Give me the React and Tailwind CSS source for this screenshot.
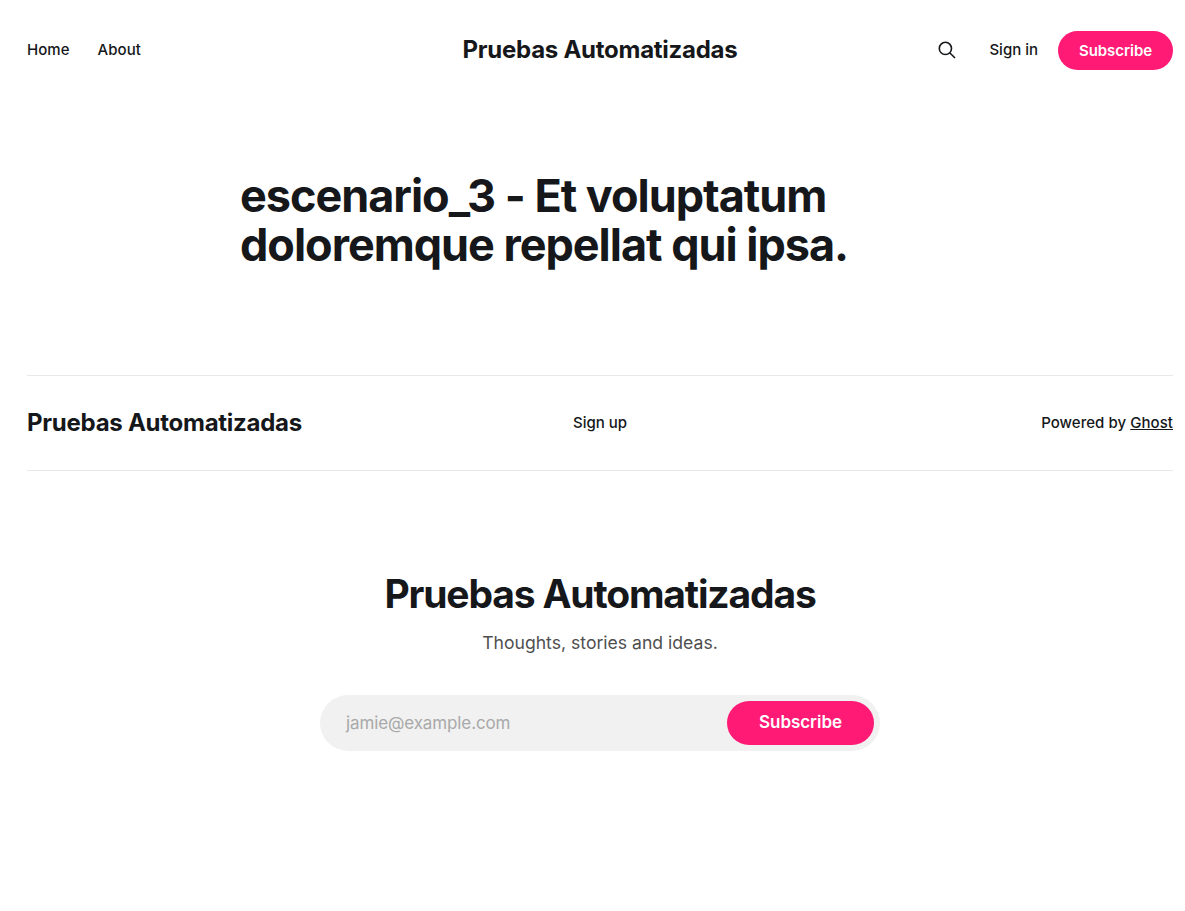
export default function App() {
  return (
    <div className="flex min-h-[911px] flex-col overflow-x-hidden bg-white font-['Inter',sans-serif] text-[#15171a]">
      <div className="w-[1200px] px-[27px] text-[15px] font-medium tracking-[0.05px] antialiased">
        <header className="grid h-[100px] grid-cols-[1fr_auto_1fr] items-center">
          <nav className="flex gap-7">
            <a>Home</a>
            <a>About</a>
          </nav>
          <a className="text-2xl font-bold tracking-[-0.26px]">Pruebas Automatizadas</a>
          <div className="flex items-center justify-end">
            <svg className="mr-8 size-5" viewBox="0 0 20 20" fill="none" stroke="currentColor" strokeWidth="1.6">
              <circle cx="8.4" cy="8.4" r="6.1" />
              <path d="M12.7 12.7L18 18" />
            </svg>
            <a className="mr-5 tracking-normal">Sign in</a>
            <a className="flex h-[39px] w-[115px] items-center justify-center rounded-full bg-[#ff1a75] pt-0.5 font-semibold tracking-[-0.06px] text-white">Subscribe</a>
          </div>
        </header>
        <main className="mx-auto w-[720px] pt-[71px]">
          <h1 className="h-[204px] text-[45px] leading-[49px] font-bold tracking-[-1.02px]">
            escenario_3 - Et voluptatum doloremque repellat qui ipsa.
          </h1>
        </main>
        <footer>
          <div className="grid h-24 grid-cols-[1fr_auto_1fr] items-center border-y border-[#e8e8e8]">
            <span className="text-2xl font-bold tracking-[-0.26px]">Pruebas Automatizadas</span>
            <a className="tracking-normal">Sign up</a>
            <div className="text-right">Powered by <a className="underline">Ghost</a></div>
          </div>
          <section className="flex flex-col items-center pt-[99px]">
            <h2 className="text-[39px] leading-[47px] font-bold tracking-[-0.03em]">Pruebas Automatizadas</h2>
            <p className="mt-3 text-[17.6px] leading-[28px] font-normal tracking-normal text-[#4f4f4f]">Thoughts, stories and ideas.</p>
            <form className="mt-[38px] flex h-14 w-[560px] items-center justify-between rounded-full bg-[#f1f1f1] pr-[6px] pl-[26px] text-[17px]">
              <span className="pt-0.5 font-normal tracking-[-0.12px] text-[#a9a9a9]">jamie@example.com</span>
              <span className="flex h-11 w-[147px] items-center justify-center rounded-full bg-[#ff1a75] font-semibold tracking-[-0.05px] text-white">Subscribe</span>
            </form>
          </section>
        </footer>
      </div>
    </div>
  );
}
